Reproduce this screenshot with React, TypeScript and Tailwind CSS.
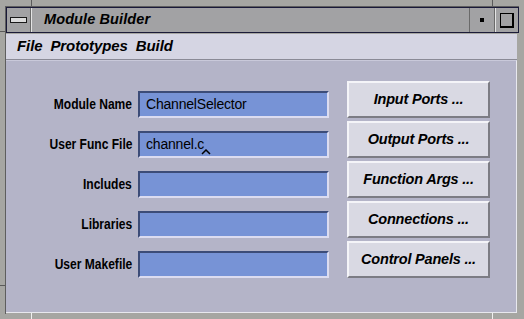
import React from "react";

const fields = [
  { label: "Module Name", value: "ChannelSelector" },
  { label: "User Func File", value: "channel.c", caret: true },
  { label: "Includes", value: "" },
  { label: "Libraries", value: "" },
  { label: "User Makefile", value: "" },
];

const actions = ["Input Ports ...", "Output Ports ...", "Function Args ...", "Connections ...", "Control Panels ..."];

export default function App() {
  return (
    <div className="relative h-[319px] w-[524px] overflow-hidden bg-[#a6a6a2] font-['Liberation_Sans',Arial,sans-serif] text-black">
      {/* resize handle ticks on the frame */}
      <span className="absolute left-[31px] top-0 h-[7px] w-px bg-[#5a5a5a]" />
      <span className="absolute left-[492px] top-0 h-[7px] w-px bg-[#5a5a5a]" />
      <span className="absolute left-0 top-[31px] h-px w-[6px] bg-[#5a5a5a]" />
      <span className="absolute left-0 top-[285px] h-px w-[6px] bg-[#5a5a5a]" />
      <span className="absolute bottom-0 left-[31px] h-[6px] w-px bg-[#f0f0f0]" />
      <span className="absolute bottom-0 left-[492px] h-[6px] w-px bg-[#f0f0f0]" />

      <div className="absolute left-[5px] top-[6px] flex h-[308px] w-[514px] flex-col border-l border-t border-[#5e5e5e]">
        <TitleBar />
        <div className="flex h-[26px] w-[511px] items-center border-b border-[#8a8a96] bg-[#d5d5e3] pl-[11px] text-[15px] font-bold italic tracking-[-0.1px]">
          <span>File</span>
          <span className="ml-[8px]">Prototypes</span>
          <span className="ml-[8px]">Build</span>
        </div>
        <main className="flex h-[253px] w-[511px] border-r border-b border-t border-r-[#e8e8ee] border-b-[#e8e8ee] border-t-[#c9c9da] bg-[#b4b4c8]">
          <div className="flex flex-col gap-[13px] pt-[30px]">
            {fields.map((f) => (
              <div key={f.label} className="flex h-[27px] items-center">
                <span className="w-[127px] pr-px text-right text-[14px] font-bold">
                  <span className="inline-block origin-right scale-x-[0.86]">{f.label}</span>
                </span>
                <div className="relative ml-[5px] flex h-[27px] w-[191px] items-center border-l-2 border-t-2 border-b-2 border-r-2 border-l-[#3c4c78] border-t-[#3c4c78] border-b-[#dcdcf0] border-r-[#dcdcf0] bg-[#7793d6] pl-[6px] text-[14px] tracking-[-0.2px]">
                  {f.value}
                  {f.caret && (
                    <svg className="absolute left-[61px] top-[16px]" width="10" height="6" viewBox="0 0 10 6">
                      <polyline points="1,5 5,1 9,5" fill="none" stroke="black" strokeWidth="1.5" />
                    </svg>
                  )}
                </div>
              </div>
            ))}
          </div>
          <div className="ml-[18px] flex flex-col gap-[3px] pt-[20px]">
            {actions.map((a) => (
              <button
                key={a}
                className="flex h-[37px] w-[143px] items-center justify-center border-l-2 border-t-2 border-b-2 border-r-2 border-l-[#f4f4f8] border-t-[#f4f4f8] border-b-[#7c7c84] border-r-[#7c7c84] bg-[#d9d9e3] text-[14.5px] font-bold italic tracking-[-0.2px]"
              >
                {a}
              </button>
            ))}
          </div>
        </main>
      </div>
    </div>
  );
}

function TitleBar() {
  return (
    <div className="mb-[1px] flex h-[26px] w-[513px] border border-[#1a1a38] bg-[#a2a2a4]">
      <div className="flex w-[24px] items-center justify-center border-r border-r-[#6a6a6a]">
        <span className="h-[6px] w-[17px] border border-[#1a1a1a] bg-[#dcdcdc]" />
      </div>
      <div className="flex flex-1 items-center border-l border-l-[#e4e4e4] pl-[12px] text-[14.5px] font-bold italic tracking-[0.1px]">
        Module Builder
      </div>
      <div className="flex w-[26px] items-center justify-center border-l border-r border-l-[#6a6a6a] border-r-[#6a6a6a]">
        <span className="h-[4px] w-[4px] bg-black" />
      </div>
      <div className="flex w-[23px] items-center justify-center border-l border-l-[#e4e4e4]">
        <span className="h-[15px] w-[14px] border-b-2 border-l border-r-2 border-t border-black" />
      </div>
    </div>
  );
}
